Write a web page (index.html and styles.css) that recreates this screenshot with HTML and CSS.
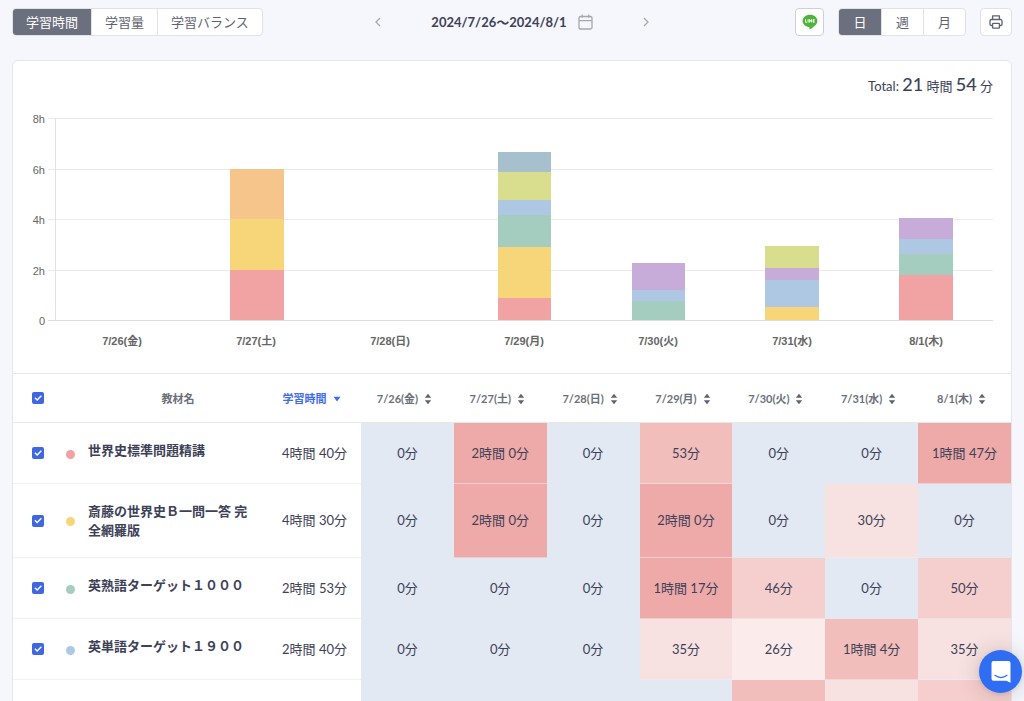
FILE: index.html
```html
<!DOCTYPE html>
<html lang="ja">
<head>
<meta charset="utf-8">
<title>学習時間</title>
<link rel="stylesheet" href="styles.css">
</head>
<body>
<header class="toolbar">
  <div class="segment">
    <button class="segment-item active">学習時間</button>
    <button class="segment-item">学習量</button>
    <button class="segment-item">学習バランス</button>
  </div>
  <div class="period">
    <button class="icon-plain" aria-label="前へ"><svg width="8" height="10" viewBox="0 0 8 10"><path d="M6 1 2 5l4 4"/></svg></button>
    <button class="period-label">2024/7/26〜2024/8/1
      <svg width="15" height="16" viewBox="0 0 15 16"><rect x="1" y="2.5" width="13" height="12.5" rx="1.5"/><path d="M1 6.7h13M4.2.5v3.2M10.8.5v3.2"/></svg>
    </button>
    <button class="icon-plain" aria-label="次へ"><svg width="8" height="10" viewBox="0 0 8 10"><path d="m2 1 4 4-4 4"/></svg></button>
  </div>
  <div class="tools">
    <button class="icon-box line-share" aria-label="LINE">
      <svg width="16" height="16" viewBox="0 0 16 16"><path fill="#4eb53a" d="M8 .8C3.900.8.6 3.500.6 6.900c0 3 2.600 5.500 6.200 6 .9.2.6.8.5 1.800-.1.600.3.700.8.400 2.200-1.200 7.300-4.300 7.300-8.200C15.400 3.500 12.100.8 8 .8z"/><path fill="none" stroke="#fff" stroke-width="1" d="M3.500 5.300v2.900h1.400M6.100 5.300v3.200M7.600 8.500V5.500l1.900 2.700V5.300M12.600 5.700h-1.500v2.500h1.500M11.100 7h1.400"/></svg>
    </button>
    <div class="segment units">
      <button class="segment-item active">日</button>
      <button class="segment-item">週</button>
      <button class="segment-item">月</button>
    </div>
    <button class="icon-box" aria-label="印刷">
      <svg width="14" height="14" viewBox="0 0 14 14"><g fill="none" stroke="#5f6370" stroke-width="1.300" stroke-linejoin="round"><path d="M3.600 4.500V.9h6.800v3.600M3.600 10.500H2.300A1.300 1.300 0 0 1 1 9.200V5.900a1.400 1.400 0 0 1 1.400-1.400h9.200A1.400 1.400 0 0 1 13 5.900v3.300a1.300 1.300 0 0 1-1.300 1.300h-1.300"/><rect x="3.600" y="8.300" width="6.800" height="4.800" rx=".6"/></g></svg>
    </button>
  </div>
</header>

<main class="card">
  <p class="total">Total: <b>21</b> 時間 <b>54</b> 分</p>

  <section class="chart" aria-label="学習時間グラフ">
    <div class="axis-y"><span>8h</span><span>6h</span><span>4h</span><span>2h</span><span>0</span></div>
    <div class="plot">
      <div class="grid-lines"><i></i><i></i><i></i><i></i></div>
      <div class="bars">
        <div class="bar"></div>
        <div class="bar">
          <i class="orange" style="height:25%"></i><i class="yellow" style="height:25%"></i><i class="red" style="height:25%"></i>
        </div>
        <div class="bar"></div>
        <div class="bar">
          <i class="steel" style="height:9.8%"></i><i class="lime" style="height:14.2%"></i><i class="blue" style="height:7.3%"></i><i class="green" style="height:16%"></i><i class="yellow" style="height:25%"></i><i class="red" style="height:11%"></i>
        </div>
        <div class="bar">
          <i class="purple" style="height:13.3%"></i><i class="blue" style="height:5.4%"></i><i class="green" style="height:9.6%"></i>
        </div>
        <div class="bar">
          <i class="lime" style="height:10.8%"></i><i class="purple" style="height:6.3%"></i><i class="blue" style="height:13.3%"></i><i class="yellow" style="height:6.3%"></i>
        </div>
        <div class="bar">
          <i class="purple" style="height:10.4%"></i><i class="blue" style="height:7.3%"></i><i class="green" style="height:10.4%"></i><i class="red" style="height:22.3%"></i>
        </div>
      </div>
    </div>
    <div class="axis-x"><span>7/26(金)</span><span>7/27(土)</span><span>7/28(日)</span><span>7/29(月)</span><span>7/30(火)</span><span>7/31(水)</span><span>8/1(木)</span></div>
  </section>

  <table class="records">
    <colgroup><col class="col-check"><col class="col-dot"><col class="col-name"><col class="col-total"><col span="7"></colgroup>
    <thead>
      <tr>
        <th class="check"><input type="checkbox" checked aria-label="すべて選択"></th>
        <th></th>
        <th>教材名</th>
        <th><button class="sort sorted">学習時間<svg width="8" height="6" viewBox="0 0 8 6"><path d="M.5.800h7L4 5.500z"/></svg></button></th>
        <th><button class="sort">7/26(金)<svg width="8" height="12" viewBox="0 0 8 12"><path d="M.800 4.800h6.400L4 .8zM.800 7.200h6.400L4 11.200z"/></svg></button></th>
        <th><button class="sort">7/27(土)<svg width="8" height="12" viewBox="0 0 8 12"><path d="M.800 4.800h6.400L4 .8zM.800 7.200h6.400L4 11.200z"/></svg></button></th>
        <th><button class="sort">7/28(日)<svg width="8" height="12" viewBox="0 0 8 12"><path d="M.800 4.800h6.400L4 .8zM.800 7.200h6.400L4 11.200z"/></svg></button></th>
        <th><button class="sort">7/29(月)<svg width="8" height="12" viewBox="0 0 8 12"><path d="M.800 4.800h6.400L4 .8zM.800 7.200h6.400L4 11.200z"/></svg></button></th>
        <th><button class="sort">7/30(火)<svg width="8" height="12" viewBox="0 0 8 12"><path d="M.800 4.800h6.400L4 .8zM.800 7.200h6.400L4 11.200z"/></svg></button></th>
        <th><button class="sort">7/31(水)<svg width="8" height="12" viewBox="0 0 8 12"><path d="M.800 4.800h6.400L4 .8zM.800 7.200h6.400L4 11.200z"/></svg></button></th>
        <th><button class="sort">8/1(木)<svg width="8" height="12" viewBox="0 0 8 12"><path d="M.800 4.800h6.400L4 .8zM.800 7.200h6.400L4 11.200z"/></svg></button></th>
      </tr>
    </thead>
    <tbody>
      <tr>
        <td class="check"><input type="checkbox" checked aria-labelledby="n1"></td>
        <td><i class="dot red"></i></td>
        <td class="name" id="n1">世界史標準問題精講</td>
        <td>4時間 40分</td>
        <td class="h0">0分</td><td class="h5">2時間 0分</td><td class="h0">0分</td><td class="h4">53分</td><td class="h0">0分</td><td class="h0">0分</td><td class="h5">1時間 47分</td>
      </tr>
      <tr>
        <td class="check"><input type="checkbox" checked aria-labelledby="n2"></td>
        <td><i class="dot yellow"></i></td>
        <td class="name" id="n2">斎藤の世界史Ｂ一問一答 完全網羅版</td>
        <td>4時間 30分</td>
        <td class="h0">0分</td><td class="h5">2時間 0分</td><td class="h0">0分</td><td class="h5">2時間 0分</td><td class="h0">0分</td><td class="h2">30分</td><td class="h0">0分</td>
      </tr>
      <tr>
        <td class="check"><input type="checkbox" checked aria-labelledby="n3"></td>
        <td><i class="dot green"></i></td>
        <td class="name" id="n3">英熟語ターゲット１０００</td>
        <td>2時間 53分</td>
        <td class="h0">0分</td><td class="h0">0分</td><td class="h0">0分</td><td class="h5">1時間 17分</td><td class="h3">46分</td><td class="h0">0分</td><td class="h3">50分</td>
      </tr>
      <tr>
        <td class="check"><input type="checkbox" checked aria-labelledby="n4"></td>
        <td><i class="dot blue"></i></td>
        <td class="name" id="n4">英単語ターゲット１９００</td>
        <td>2時間 40分</td>
        <td class="h0">0分</td><td class="h0">0分</td><td class="h0">0分</td><td class="h2">35分</td><td class="h1">26分</td><td class="h4">1時間 4分</td><td class="h2">35分</td>
      </tr>
      <tr>
        <td class="check"><input type="checkbox" checked aria-labelledby="n5"></td>
        <td><i class="dot purple"></i></td>
        <td class="name" id="n5">でる順の英語長文プラス</td>
        <td></td>
        <td class="h0"></td><td class="h0"></td><td class="h0"></td><td class="h0"></td><td class="h4"></td><td class="h2"></td><td class="h3"></td>
      </tr>
    </tbody>
  </table>
</main>

<button class="chat" aria-label="チャット">
  <svg width="20" height="22" viewBox="0 0 20 22"><path fill="#fff" d="M2.500 0h15A2 2 0 0 1 19.500 2v19.800L15.300 19.800H2.500a2 2 0 0 1-2-2V2a2 2 0 0 1 2-2z"/><path fill="none" stroke="#2f6df2" stroke-width="1.200" stroke-linecap="round" d="M4 14.300c3.600 2.700 8.400 2.700 12 0"/></svg>
</button>
</body>
</html>
```
FILE: styles.css
```css
* { box-sizing: border-box; }
html { height: 100%; }
body {
  height: 100%;
  margin: 0;
  padding: 8px 12px 0;
  overflow: hidden;
  background: #f5f7fc;
  color: #3d4157;
  font: 13px/19px Lato, "Noto Sans CJK JP", sans-serif;
}
button {
  margin: 0;
  padding: 0;
  border: 0;
  background: none;
  color: inherit;
  font: inherit;
  cursor: pointer;
}
svg { display: block; flex: none; }

/* Toolbar */
.toolbar {
  display: grid;
  grid-template-columns: 1fr auto 1fr;
  align-items: center;
}
.segment {
  display: flex;
  justify-self: start;
  height: 28px;
  overflow: hidden;
  border: 1px solid #dfe2e8;
  border-radius: 4px;
  background: #fff;
}
.segment-item {
  padding: 0 13px;
  border-left: 1px solid #dfe2e8;
  color: #5f6370;
}
.segment-item:first-child { border-left: 0; }
.segment-item.active { background: #6b6f7e; color: #fff; }
.units .segment-item { width: 42px; padding: 0; }
.period { display: flex; align-items: center; gap: 45px; }
.period svg { fill: none; stroke: #a4a8b0; stroke-width: 1.3; }
.period-label {
  display: flex;
  align-items: center;
  gap: 11px;
  font-weight: 700;
}
.icon-plain { padding: 4px; }
.tools { display: flex; justify-self: end; gap: 14px; }
.icon-box {
  display: grid;
  place-items: center;
  width: 32px;
  height: 28px;
  border: 1px solid #dfe2e8;
  border-radius: 4px;
  background: #fff;
}
.line-share { width: 29px; border-color: #cdd0d6; }

/* Card */
.card {
  margin-top: 24px;
  overflow: hidden;
  border: 1px solid #e3e6ec;
  border-radius: 6px;
  background: #fff;
}
.total {
  margin: 11px 18px 0;
  line-height: 24px;
  text-align: right;
}
.total b { font-size: 18px; font-weight: 500; }

/* Chart */
.chart {
  display: grid;
  grid-template-columns: 35px 1fr;
  padding: 20px 18px 22px 0;
  color: #666;
  font: bold 11px/20px "Liberation Sans", "Noto Sans CJK JP", sans-serif;
}
.axis-y {
  display: flex;
  flex-direction: column;
  justify-content: space-between;
  margin: -9px 3px -10px 0;
  font-weight: 400;
  text-align: right;
}
.plot {
  display: grid;
  height: 203px;
  border-bottom: 1px solid #dcdde0;
}
.grid-lines, .bars { grid-area: 1 / 1; }
.grid-lines {
  display: grid;
  grid-template-rows: repeat(4, 1fr);
}
.grid-lines i { border-top: 1px solid #ebebed; }
.bars {
  display: grid;
  grid-template-columns: repeat(7, 1fr);
  margin-left: 7px;
  border-left: 1px solid #e2e3e6;
}
.bar {
  display: flex;
  flex-direction: column;
  justify-content: flex-end;
  align-items: center;
  height: 202px;
}
.bar i { width: 40%; }
.axis-x {
  grid-column: 2;
  display: grid;
  grid-template-columns: repeat(7, 1fr);
  margin: 10px 0 0 7px;
  text-align: center;
}
.red { background: #f0a3a2; }
.yellow { background: #f6d678; }
.orange { background: #f5c58b; }
.green { background: #a4cdc0; }
.blue { background: #aec8e3; }
.purple { background: #c7acda; }
.lime { background: #d8de8e; }
.steel { background: #a6c0cd; }

/* Records */
.records {
  width: 100%;
  border-top: 1px solid #e6e8ec;
  border-spacing: 0;
  table-layout: fixed;
}
.col-check { width: 50px; }
.col-dot { width: 25px; }
.col-name { width: 180px; }
.col-total { width: 93px; }
th {
  height: 49px;
  padding: 0;
  border-bottom: 1px solid #e6e8ec;
  color: #6c6f7a;
  font-size: 11px;
}
.sort {
  display: inline-flex;
  align-items: center;
  gap: 6px;
  padding-right: 6px;
  font-weight: 700;
  vertical-align: middle;
}
.sort svg { fill: #5f6370; }
.sorted { color: #3f6ce8; }
.sorted svg { fill: #3f6ce8; }
td {
  height: 61px;
  padding: 0;
  border-bottom: 1px solid #eff1f4;
  text-align: center;
}
.name {
  padding: 18px 15px 17px 0;
  font-weight: 700;
  text-align: left;
  vertical-align: top;
}
input[type="checkbox"] {
  appearance: none;
  display: block;
  width: 12px;
  height: 12px;
  margin: 0 auto;
  border-radius: 2px;
  background: #3f68e0;
}
input[type="checkbox"]:checked::before {
  content: "";
  display: block;
  width: 12px;
  height: 12px;
  background: #fff;
  clip-path: polygon(20% 52%, 28% 44%, 43% 59%, 74% 27%, 82% 35%, 43% 75%);
}
.dot {
  display: block;
  width: 9px;
  height: 9px;
  margin: 2px 0 0 3px;
  border-radius: 50%;
}
.h0, .h1, .h2, .h3, .h4, .h5 { border-bottom-color: rgba(238, 240, 246, .5); }
.h0 { border-bottom-color: #e2e9f3; background: #e2e9f3; }
.h1 { background: #fbeceb; }
.h2 { background: #f7e1e1; }
.h3 { background: #f5cfce; }
.h4 { background: #f1bebb; }
.h5 { background: #eeaaa9; }

/* Chat launcher */
.chat {
  position: fixed;
  right: 2px;
  bottom: 8px;
  display: grid;
  place-items: center;
  width: 43px;
  height: 43px;
  border-radius: 50%;
  background: #2f6df2;
  box-shadow: 0 1px 5px rgba(0, 0, 0, .1), 0 2px 24px rgba(0, 0, 0, .18);
}
```
